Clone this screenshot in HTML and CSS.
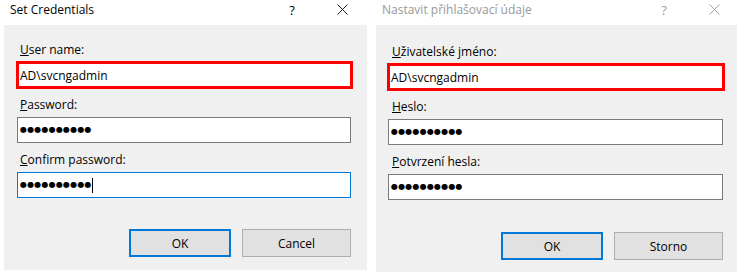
FILE: index.html
```
<!DOCTYPE html>
<html lang="en">
<head>
<meta charset="UTF-8">
<title>Set Credentials</title>
<link rel="stylesheet" href="styles.css">
</head>
<body>
<div class="screens">

<div class="dialog dialog-en">
<div class="titlebar">
<div class="title">Set Credentials</div>
<div class="ctl help">?</div>
<div class="ctl close">
<svg width="11" height="11" viewBox="0 0 11 11"><path d="M0.5 0.5 L10.5 10.5 M10.5 0.5 L0.5 10.5" stroke="#222" stroke-width="1" fill="none"/></svg>
</div>
</div>
<div class="panel">
<div class="field">
<div class="label"><u>U</u>ser name:</div>
<div class="input marked">AD\svcngadmin</div>
</div>
<div class="field">
<div class="label"><u>P</u>assword:</div>
<div class="input"><span class="dots">●●●●●●●●●●</span></div>
</div>
<div class="field">
<div class="label"><u>C</u>onfirm password:</div>
<div class="input focused"><span class="dots">●●●●●●●●●●</span><span class="caret"></span></div>
</div>
<div class="buttons">
<button class="button default">OK</button>
<button class="button">Cancel</button>
</div>
</div>
</div>

<div class="dialog dialog-cz">
<div class="titlebar">
<div class="title">Nastavit přihlašovací údaje</div>
<div class="ctl help">?</div>
<div class="ctl close">
<svg width="11" height="11" viewBox="0 0 11 11"><path d="M0.5 0.5 L10.5 10.5 M10.5 0.5 L0.5 10.5" stroke="#a0a0a0" stroke-width="1" fill="none"/></svg>
</div>
</div>
<div class="panel">
<div class="field">
<div class="label"><u>U</u>živatelské jméno:</div>
<div class="input marked">AD\svcngadmin</div>
</div>
<div class="field">
<div class="label"><u>H</u>eslo:</div>
<div class="input"><span class="dots">●●●●●●●●●●</span></div>
</div>
<div class="field">
<div class="label"><u>P</u>otvrzení hesla:</div>
<div class="input"><span class="dots">●●●●●●●●●●</span></div>
</div>
<div class="buttons">
<button class="button default">OK</button>
<button class="button">Storno</button>
</div>
</div>
</div>

</div>
</body>
</html>
```

FILE: styles.css
```
body {
margin: 0;
background: #fff;
font-family: "Open Sans", sans-serif;
font-size: 12px;
color: #000;
}

.screens {
display: flex;
gap: 9px;
padding-left: 4px;
}

.dialog-en {
width: 363px;
}

.dialog-cz {
width: 361px;
}

/* title bar */
.titlebar {
display: flex;
align-items: center;
height: 25px;
}

.title {
flex: 1;
padding-left: 6px;
line-height: 16px;
margin-top: -6px;
}

.ctl {
width: 50px;
display: flex;
justify-content: center;
margin-top: -6px;
}

.help {
font-size: 13px;
line-height: 16px;
}

.dialog-cz .titlebar {
color: #999;
}

.dialog-cz .close {
margin-right: -2px;
}

/* form panel */
.panel {
background: #f0f0f0;
padding: 17px 16px 13px 13px;
}

.dialog-cz .panel {
padding: 19px 14px 12px 12px;
}

.field {
margin-top: 8px;
}

.field:first-child {
margin-top: 0;
}

.field + .field + .field {
margin-top: 9px;
}

.label {
line-height: 16px;
padding-left: 3px;
margin-bottom: 4px;
}

.dialog-cz .label {
padding-left: 4px;
}

.input {
background: #fff;
border: 1px solid #7a7a7a;
height: 24px;
padding-left: 2px;
display: flex;
align-items: center;
}

.input.marked {
border: 3px solid #ff0000;
height: 22px;
padding-left: 1px;
margin: -1px -2px 0 -1px;
}

.input.focused {
border-color: #0078d7;
}

.dots {
font-family: "DejaVu Sans", sans-serif;
font-size: 8px;
letter-spacing: 0.2px;
line-height: 10px;
}

.caret {
display: inline-block;
width: 1px;
height: 15px;
background: #000;
margin-left: 0;
}

/* buttons */
.buttons {
display: flex;
justify-content: flex-end;
gap: 11px;
margin-top: 31px;
}

.dialog-cz .buttons {
margin-top: 32px;
}

.button {
font-family: "Open Sans", sans-serif;
font-size: 12px;
color: #000;
background: #e1e1e1;
border: 1px solid #adadad;
height: 28px;
width: 109px;
padding: 0;
}

.button.default {
border: 2px solid #0078d7;
width: 102px;
}
```
